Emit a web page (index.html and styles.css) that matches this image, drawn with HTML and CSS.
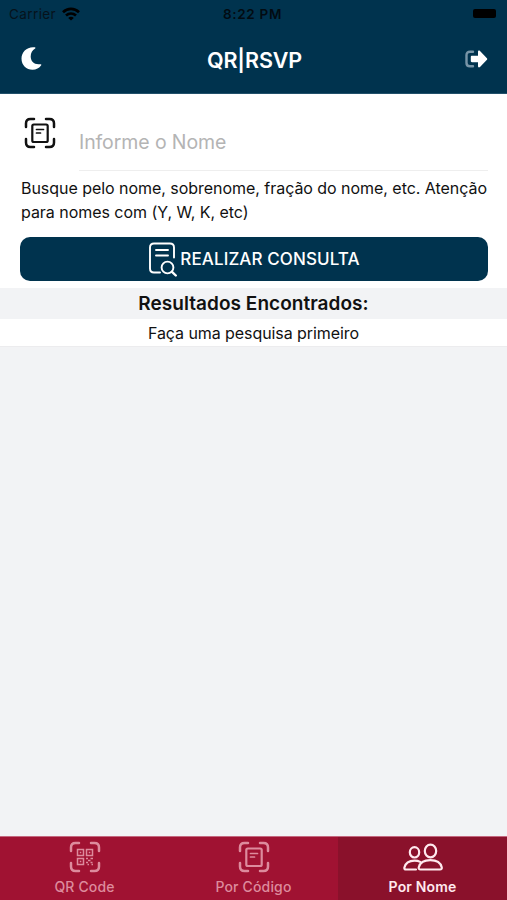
FILE: index.html
```html
<!DOCTYPE html>
<html lang="pt-BR">
<head>
    <meta charset="UTF-8">
    <meta name="viewport" content="width=device-width, initial-scale=1.0">
    <title>QR|RSVP</title>
    <link rel="stylesheet" href="styles.css">
</head>
<body>
    <header>
        <div class="status-bar">
            <div class="carrier">
                <span>Carrier</span>
                <svg width="18" height="14" viewBox="0 0 18 14" fill="none" stroke="#000" stroke-width="2.7">
                    <path d="M1 5.2C5.6.8 12.4.8 17 5.2"/>
                    <path d="M4 8.5c3-2.7 7-2.7 10 0"/>
                    <path d="M9 13.6L6.2 10.9c1.6-1.4 4-1.4 5.6 0z" fill="#000" stroke="none"/>
                </svg>
            </div>
            <span class="clock">8:22 PM</span>
            <span class="battery"></span>
        </div>
        <div class="nav-bar">
            <svg class="moon" width="21" height="23" viewBox="0 0 21 23">
                <path d="M13.8.3C6.3-.7.5 4.600.5 11.500S5.500 22.700 11.500 22.700c3.700 0 6.800-1.700 8.700-4.500.4-.6 0-1.100-.7-1C13.500 18.200 9.700 14.600 9.700 9.600c0-3.500 1.600-6.400 4.400-8.100.6-.4.4-1.100-.3-1.200z" fill="#fff"/>
            </svg>
            <h1>QR|RSVP</h1>
            <svg width="23" height="18" viewBox="0 0 23 18">
                <path d="M8 1.700H5C2.700 1.700 1.500 3 1.500 5v8c0 2 1.200 3.300 3.500 3.300h3" fill="none" stroke="#7895a7" stroke-width="2.400" stroke-linecap="round"/>
                <path d="M7 5.800h6V2c0-1.400 1-1.800 2-.9l6.700 6.800c.7.700.7 1.500 0 2.200L15 16.900c-1 .9-2 .5-2-.9v-3.800H7c-.8 0-1.200-.5-1.200-1.200V7c0-.7.400-1.200 1.200-1.200z" fill="#fff"/>
            </svg>
        </div>
    </header>

    <main>
        <section class="search">
            <div class="field">
                <svg class="scan-icon" width="32" height="32" viewBox="0 0 32 32">
                    <use href="#scan-doc"/>
                </svg>
                <input type="text" placeholder="Informe o Nome">
            </div>
            <p>Busque pelo nome, sobrenome, fração do nome, etc. Atenção<br>para nomes com (Y, W, K, etc)</p>
            <button class="search-btn">
                <svg width="28" height="35" viewBox="0 0 28 35" fill="none" stroke="currentColor" stroke-width="1.900" stroke-linecap="round">
                    <path d="M25 15.500V5.500c0-2.600-1.400-4-4-4H5c-2.600 0-4 1.400-4 4v21c0 2.600 1.400 4 4 4h6"/>
                    <path d="M7 8h12M7 13.500h12"/>
                    <circle cx="18.500" cy="25.500" r="5.900"/>
                    <path d="M23 29.800l3.800 3.700" stroke-width="2.400"/>
                </svg>
                <span>REALIZAR CONSULTA</span>
            </button>
        </section>
        <h2>Resultados Encontrados:</h2>
        <div class="result">Faça uma pesquisa primeiro</div>
    </main>

    <nav class="tabs">
        <a class="tab">
            <svg width="32" height="32" viewBox="0 0 32 32" fill="none" stroke="currentColor" stroke-width="1.500">
                <use href="#scan-frame"/>
                <path d="M8.500 8.500h6v6h-6zM17.500 8.500h6v6h-6zM8.500 17.500h6v6h-6z"/>
                <path d="M10.800 11.500h1.500M19.800 11.500h1.500M10.800 20.500h1.500" stroke-width="1.600"/>
                <path d="M17 17.500h2M21.500 17.500h2.500M19 19.500h2.500M17 21.500h2M21.500 21.500h2M18.500 23.500h1.500M22.500 23.500H24" stroke-width="1.700"/>
            </svg>
            <span>QR Code</span>
        </a>
        <a class="tab">
            <svg width="32" height="32" viewBox="0 0 32 32">
                <use href="#scan-doc"/>
            </svg>
            <span>Por Código</span>
        </a>
        <a class="tab active">
            <svg width="40" height="32" viewBox="0 0 40 32" fill="none" stroke="currentColor" stroke-width="2.200" stroke-linecap="round" stroke-linejoin="round">
                <ellipse cx="27.500" cy="10" rx="5.700" ry="6.300"/>
                <ellipse cx="11.500" cy="11.300" rx="4.700" ry="5.200"/>
                <path d="M17.500 28.500h19.500c1.400 0 2-.9 1.700-2.200-1-4.300-5.300-7.200-11.400-7.200s-10.400 2.900-11.500 7.200c-.3 1.300.3 2.200 1.700 2.200z"/>
                <path d="M13 28.500H3c-1.300 0-1.900-.8-1.600-2 1-4.200 4.700-6.900 10.100-6.900 2.200 0 4.100.4 5.700 1.300"/>
            </svg>
            <span>Por Nome</span>
        </a>
    </nav>

    <!-- shared icons -->
    <svg class="defs" width="0" height="0">
        <defs>
            <g id="scan-frame" fill="none" stroke="currentColor" stroke-width="2.500" stroke-linecap="round">
                <path d="M2 10V6.500C2 3.500 3.500 2 6.500 2H10M22 2h3.500c3 0 4.500 1.500 4.500 4.500V10M30 22v3.500c0 3-1.500 4.500-4.500 4.500H22M10 30H6.500c-3 0-4.500-1.500-4.500-4.500V22"/>
            </g>
            <g id="scan-doc" fill="none" stroke="currentColor" stroke-linecap="round">
                <use href="#scan-frame"/>
                <rect x="8.300" y="7.500" width="15.400" height="17.500" rx="1.500" stroke-width="2.200"/>
                <path d="M12.500 12.500h7M12.500 16h4" stroke-width="1.700"/>
            </g>
        </defs>
    </svg>
</body>
</html>
```
FILE: styles.css
```css
* {
    box-sizing: border-box;
}
body {
    font-family: Inter, "Liberation Sans", sans-serif;
    display: flex;
    flex-direction: column;
    height: 100vh;
    margin: 0;
    background-color: #f2f3f5;
    color: #111;
}
header {
    height: 94px;
    background-color: #00334e;
    border-bottom: 1px solid #21506a;
}
.status-bar {
    display: grid;
    grid-template-columns: 1fr auto 1fr;
    align-items: center;
    height: 27px;
    padding: 0 11px 0 9px;
    font-size: 13.5px;
    color: #000;
}
.carrier {
    display: flex;
    align-items: center;
    gap: 6px;
    color: #06121b;
    letter-spacing: 0.4px;
}
.clock {
    font-weight: 600;
    letter-spacing: 0.7px;
    color: #020b12;
}
.battery {
    justify-self: end;
    width: 23px;
    height: 9px;
    border-radius: 2px;
    background-color: #000;
}
.nav-bar {
    display: grid;
    grid-template-columns: 1fr auto 1fr;
    align-items: center;
    height: 64px;
    padding: 0 19px 0 21px;
}
.nav-bar svg:last-child {
    justify-self: end;
}
.moon {
    margin-bottom: 1px;
}
h1 {
    margin: 2px 0 0;
    font-size: 21.5px;
    font-weight: 600;
    letter-spacing: -0.1px;
    color: white;
}
main {
    flex: 1;
}
.search {
    height: 194px;
    padding: 0 19px 0 20px;
    background-color: white;
}
.field {
    display: flex;
    height: 77px;
    padding-left: 4px;
}
.scan-icon {
    margin-top: 23px;
}
.field input {
    flex: 1;
    min-width: 0;
    margin-left: 23px;
    padding: 20px 0 0;
    border: none;
    border-bottom: 1px solid #eee;
    outline: none;
    background: none;
    font-family: inherit;
    font-size: 19.5px;
    letter-spacing: -0.1px;
}
.field input::placeholder {
    color: #b4b4b4;
}
.search p {
    margin: 5px 0 13px 1px;
    font-size: 16px;
    line-height: 24px;
    letter-spacing: -0.04px;
    white-space: nowrap;
}
.search-btn {
    display: flex;
    justify-content: center;
    align-items: center;
    gap: 3px;
    width: 100%;
    height: 44px;
    padding: 0 0 0 1px;
    border: none;
    border-radius: 10px;
    background-color: #00334e;
    color: white;
    font-family: inherit;
    font-size: 17px;
    font-weight: 500;
    letter-spacing: 0.1px;
}
h2 {
    margin: 0;
    font-size: 19px;
    font-weight: 600;
    line-height: 31px;
    letter-spacing: 0.04px;
    text-align: center;
}
.result {
    height: 28px;
    border-bottom: 1px solid #ececee;
    background-color: white;
    font-size: 16px;
    line-height: 29px;
    letter-spacing: -0.07px;
    text-align: center;
}
.tabs {
    display: flex;
    height: 64px;
    border-top: 1px solid #c4687f;
    background-color: #a01232;
}
.tab {
    flex: 1;
    display: flex;
    flex-direction: column;
    align-items: center;
    padding-top: 4px;
    color: #dd8b9d;
    font-size: 14px;
    font-weight: 500;
    letter-spacing: 0.15px;
}
.tab span {
    margin-top: 5px;
    line-height: 17px;
}
.tab.active {
    background-color: #8a112b;
    color: #ffe9ee;
    font-weight: 600;
}
.defs {
    position: absolute;
}
```
